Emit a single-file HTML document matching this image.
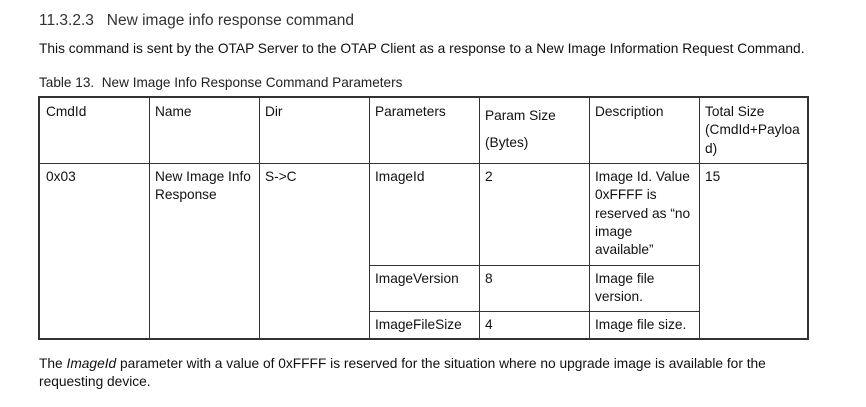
<!DOCTYPE html>
<html><head><style>
body{margin:0;width:866px;height:407px;background:#fff;font-family:"Liberation Sans",Arial,sans-serif;color:#111;position:relative;overflow:hidden}
.t{position:absolute;white-space:nowrap}
.l{position:absolute;background:#333}
.c{position:absolute;font-size:13.7px;line-height:18.3px;white-space:nowrap}
</style></head><body>
<div class="t" style="left:39px;top:12px;font-size:15.5px;color:#333">11.3.2.3&nbsp;&nbsp;&nbsp;New image info response command</div>
<div class="t" style="left:39px;top:41px;font-size:13.75px">This command is sent by the OTAP Server to the OTAP Client as a response to a New Image Information Request Command.</div>
<div class="t" style="left:39px;top:75px;font-size:13.6px;color:#222">Table 13.&nbsp; New Image Info Response Command Parameters</div>

<div class="l" style="left:38px;top:96px;width:771px;height:2px"></div>
<div class="l" style="left:38px;top:338px;width:771px;height:2px"></div>
<div class="l" style="left:38px;top:96px;width:2px;height:244px"></div>
<div class="l" style="left:807px;top:96px;width:2px;height:244px"></div>
<div class="l" style="left:149px;top:97px;width:1px;height:242px"></div>
<div class="l" style="left:259px;top:97px;width:1px;height:242px"></div>
<div class="l" style="left:369px;top:97px;width:1px;height:242px"></div>
<div class="l" style="left:479px;top:97px;width:1px;height:242px"></div>
<div class="l" style="left:589px;top:97px;width:1px;height:242px"></div>
<div class="l" style="left:699px;top:97px;width:1px;height:242px"></div>
<div class="l" style="left:39px;top:163px;width:769px;height:1px"></div>
<div class="l" style="left:369px;top:265px;width:331px;height:1px"></div>
<div class="l" style="left:369px;top:311px;width:331px;height:1px"></div>

<div class="c" style="left:46px;top:103px">CmdId</div>
<div class="c" style="left:155px;top:103px">Name</div>
<div class="c" style="left:265px;top:103px">Dir</div>
<div class="c" style="left:375px;top:103px">Parameters</div>
<div class="c" style="left:485px;top:107px">Param Size</div>
<div class="c" style="left:485px;top:134px">(Bytes)</div>
<div class="c" style="left:595px;top:103px">Description</div>
<div class="c" style="left:705px;top:103px">Total Size<br>(CmdId+Payloa<br>d)</div>

<div class="c" style="left:46px;top:168px">0x03</div>
<div class="c" style="left:155px;top:168px">New Image Info<br>Response</div>
<div class="c" style="left:265px;top:168px">S-&gt;C</div>
<div class="c" style="left:375px;top:168px">ImageId</div>
<div class="c" style="left:485px;top:168px">2</div>
<div class="c" style="left:595px;top:168px">Image Id. Value<br>0xFFFF is<br>reserved as “no<br>image<br>available”</div>
<div class="c" style="left:705px;top:168px">15</div>
<div class="c" style="left:375px;top:270px">ImageVersion</div>
<div class="c" style="left:485px;top:270px">8</div>
<div class="c" style="left:595px;top:270px">Image file<br>version.</div>
<div class="c" style="left:375px;top:316px">ImageFileSize</div>
<div class="c" style="left:485px;top:316px">4</div>
<div class="c" style="left:595px;top:316px">Image file size.</div>

<div class="c" style="left:39px;top:355px;line-height:18px;font-size:13.75px">The <i>ImageId</i> parameter with a value of 0xFFFF is reserved for the situation where no upgrade image is available for the<br>requesting device.</div>
</body></html>
